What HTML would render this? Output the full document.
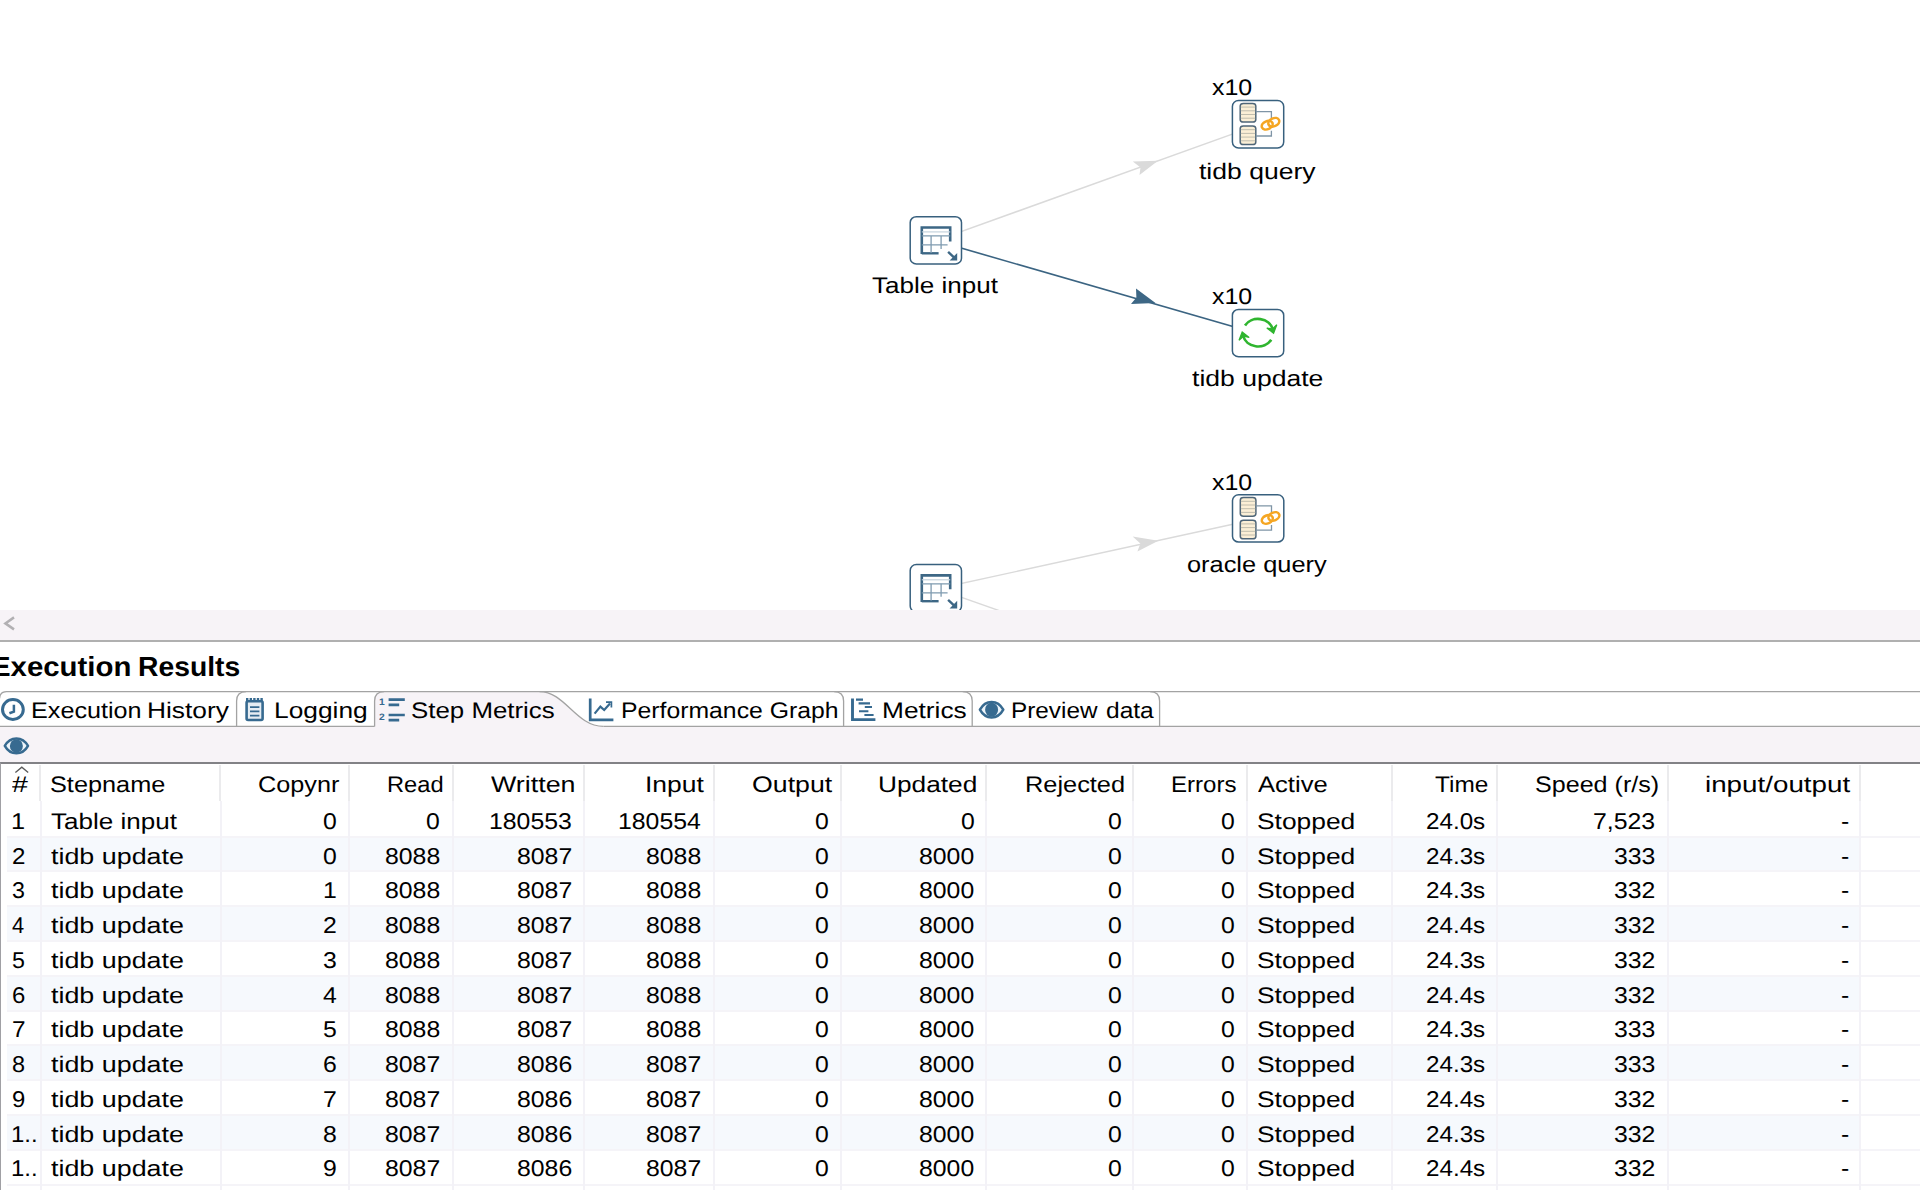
<!DOCTYPE html>
<html lang="en"><head><meta charset="utf-8"><title>Spoon - Execution Results</title>
<style>
html,body{margin:0;padding:0;background:#fff}
body{width:1920px;height:1190px;position:relative;overflow:hidden;font-family:"Liberation Sans",sans-serif;font-size:22.5px;color:#000}
.t{position:absolute;text-rendering:geometricPrecision;white-space:pre;line-height:1em;transform-origin:0 0}
.abs{position:absolute}
#canvas{position:absolute;left:0;top:0;width:1920px;height:610px;overflow:hidden;background:#fff}
#hscroll{position:absolute;left:0;top:610px;width:1920px;height:30px;background:#f7f3f7}
#sash{position:absolute;left:0;top:640px;width:1920px;height:2px;background:#b0b0b0}
#toolbar{position:absolute;left:0;top:727px;width:1920px;height:36px;background:#f7f3f7}
#grid{position:absolute;left:0;top:762px;width:1920px;height:428px;background:#fff;border-top:2px solid #828286;border-left:1px solid #a0a0a4;box-sizing:border-box;overflow:hidden}
.alt{position:absolute;left:7px;width:1853px;background:#f6f9fd}
.hl{position:absolute;left:7px;width:1913px;height:2px;background:#f5f4f8}
.vl{position:absolute;top:801px;width:2px;height:389px;background:#f3f2f7}
.vh{position:absolute;top:765px;width:2px;height:36px;background:#ebebed}
svg{position:absolute;left:0;top:0}
</style></head>
<body>
<div id="canvas">
<svg width="1920" height="610" viewBox="0 0 1920 610">
<path d="M936 240.6 L1258 124.9" stroke="#dadada" stroke-width="1.5" fill="none"/>
<path d="M1158 160.8 L1132.8 161.4 L1140.5 167.4 L1139.5 175 Z" fill="#dadada"/>
<path d="M936 240.8 L1258 333.8" stroke="#3b6482" stroke-width="1.6" fill="none"/>
<path d="M1155.5 303.1 L1136 288.6 L1136.4 297.6 L1131 304 Z" fill="#3d6785"/>
<path d="M936 589 L1258 518.8" stroke="#dadada" stroke-width="1.4" fill="none"/>
<path d="M1158.4 540.7 L1132.6 536.6 L1140.4 543.6 L1137.4 551.4 Z" fill="#dadada"/>
<path d="M936 588.3 L1030 621.5" stroke="#dadada" stroke-width="1.4" fill="none"/>
<g transform="translate(909.6,215.9)"><rect x="0.6" y="0.8" width="51.3" height="47.3" rx="6.2" ry="5.8" fill="#fff" stroke="#38607e" stroke-width="1.5"/><path d="M12.2 38.2 V11.6 H40.6 V25.5" fill="none" stroke="#3d6785" stroke-width="2.6"/><path d="M12.2 37.4 H29" fill="none" stroke="#3d6785" stroke-width="2.4"/><path d="M12.2 20 H40.6 M12.2 29 H38" fill="none" stroke="#7f9bb0" stroke-width="1.3"/><path d="M12.2 16 H40.6" fill="none" stroke="#c5d3dd" stroke-width="1.2"/><path d="M21.5 20 V37 M31.5 20 V33" fill="none" stroke="#7f9bb0" stroke-width="1.3"/><path d="M38.5 36 L46 43" fill="none" stroke="#3d6785" stroke-width="2.4"/><path d="M47.6 37 V44.6 H40 Z" fill="#3d6785"/></g>
<g transform="translate(1231.8,99.8)"><rect x="0.6" y="0.8" width="51.3" height="47.3" rx="6.2" ry="5.8" fill="#fff" stroke="#38607e" stroke-width="1.5"/><rect x="8.4" y="3.6" width="15.6" height="18.6" rx="3.2" ry="2.6" fill="#fbefd6" stroke="#4f6678" stroke-width="1.5"/><path d="M9 7.3 H23.4" stroke="#b9b7a8" stroke-width="0.9"/><path d="M9 11.0 H23.4" stroke="#b9b7a8" stroke-width="0.9"/><path d="M9 14.7 H23.4" stroke="#b9b7a8" stroke-width="0.9"/><path d="M9 18.4 H23.4" stroke="#b9b7a8" stroke-width="0.9"/><rect x="8.4" y="26.2" width="15.6" height="18.6" rx="3.2" ry="2.6" fill="#fbefd6" stroke="#4f6678" stroke-width="1.5"/><path d="M9 29.9 H23.4" stroke="#b9b7a8" stroke-width="0.9"/><path d="M9 33.6 H23.4" stroke="#b9b7a8" stroke-width="0.9"/><path d="M9 37.3 H23.4" stroke="#b9b7a8" stroke-width="0.9"/><path d="M9 41.0 H23.4" stroke="#b9b7a8" stroke-width="0.9"/><path d="M24 11.8 H39.6 V18.5 M24 36.2 H39.6 V31" fill="none" stroke="#7f95a6" stroke-width="1.3"/><ellipse cx="35.4" cy="25.4" rx="5.7" ry="4" fill="none" stroke="#f5a623" stroke-width="2.5" transform="rotate(-24 35.4 25.4)"/><ellipse cx="42" cy="22.5" rx="5.7" ry="4" fill="none" stroke="#f5a623" stroke-width="2.5" transform="rotate(-24 42 22.5)"/></g>
<g transform="translate(1231.8,308.6)"><rect x="0.6" y="0.8" width="51.3" height="47.3" rx="6.2" ry="5.8" fill="#fff" stroke="#38607e" stroke-width="1.5"/><path d="M13.2 16.8 A15.2 13.4 0 0 1 41 20.6" fill="none" stroke="#2fb52f" stroke-width="2.7"/><path d="M35 19.4 L41.8 24.6 L45 16.2 L40.6 20.4 Z" fill="#2fb52f" stroke="#2fb52f" stroke-width="1.2" stroke-linejoin="miter"/><path d="M39.4 31.2 A15.2 13.4 0 0 1 11.4 27.2" fill="none" stroke="#2fb52f" stroke-width="2.7"/><path d="M17.4 28.8 L10.4 23.4 L7.2 31.6 L11.8 27.6 Z" fill="#2fb52f" stroke="#2fb52f" stroke-width="1.2" stroke-linejoin="miter"/></g>
<g transform="translate(1231.9,494)"><rect x="0.6" y="0.8" width="51.3" height="47.3" rx="6.2" ry="5.8" fill="#fff" stroke="#38607e" stroke-width="1.5"/><rect x="8.4" y="3.6" width="15.6" height="18.6" rx="3.2" ry="2.6" fill="#fbefd6" stroke="#4f6678" stroke-width="1.5"/><path d="M9 7.3 H23.4" stroke="#b9b7a8" stroke-width="0.9"/><path d="M9 11.0 H23.4" stroke="#b9b7a8" stroke-width="0.9"/><path d="M9 14.7 H23.4" stroke="#b9b7a8" stroke-width="0.9"/><path d="M9 18.4 H23.4" stroke="#b9b7a8" stroke-width="0.9"/><rect x="8.4" y="26.2" width="15.6" height="18.6" rx="3.2" ry="2.6" fill="#fbefd6" stroke="#4f6678" stroke-width="1.5"/><path d="M9 29.9 H23.4" stroke="#b9b7a8" stroke-width="0.9"/><path d="M9 33.6 H23.4" stroke="#b9b7a8" stroke-width="0.9"/><path d="M9 37.3 H23.4" stroke="#b9b7a8" stroke-width="0.9"/><path d="M9 41.0 H23.4" stroke="#b9b7a8" stroke-width="0.9"/><path d="M24 11.8 H39.6 V18.5 M24 36.2 H39.6 V31" fill="none" stroke="#7f95a6" stroke-width="1.3"/><ellipse cx="35.4" cy="25.4" rx="5.7" ry="4" fill="none" stroke="#f5a623" stroke-width="2.5" transform="rotate(-24 35.4 25.4)"/><ellipse cx="42" cy="22.5" rx="5.7" ry="4" fill="none" stroke="#f5a623" stroke-width="2.5" transform="rotate(-24 42 22.5)"/></g>
<g transform="translate(909.6,563.8)"><rect x="0.6" y="0.8" width="51.3" height="47.3" rx="6.2" ry="5.8" fill="#fff" stroke="#38607e" stroke-width="1.5"/><path d="M12.2 38.2 V11.6 H40.6 V25.5" fill="none" stroke="#3d6785" stroke-width="2.6"/><path d="M12.2 37.4 H29" fill="none" stroke="#3d6785" stroke-width="2.4"/><path d="M12.2 20 H40.6 M12.2 29 H38" fill="none" stroke="#7f9bb0" stroke-width="1.3"/><path d="M12.2 16 H40.6" fill="none" stroke="#c5d3dd" stroke-width="1.2"/><path d="M21.5 20 V37 M31.5 20 V33" fill="none" stroke="#7f9bb0" stroke-width="1.3"/><path d="M38.5 36 L46 43" fill="none" stroke="#3d6785" stroke-width="2.4"/><path d="M47.6 37 V44.6 H40 Z" fill="#3d6785"/></g>
</svg>
<span class="t" style="left:1212.37px;top:77.00px;transform:scaleX(1.1083)">x10</span>
<span class="t" style="left:1199.05px;top:161.00px;transform:scaleX(1.1797)">tidb query</span>
<span class="t" style="left:871.82px;top:275.00px;transform:scaleX(1.1571)">Table input</span>
<span class="t" style="left:1212.37px;top:286.00px;transform:scaleX(1.1083)">x10</span>
<span class="t" style="left:1191.65px;top:368.00px;transform:scaleX(1.1800)">tidb update</span>
<span class="t" style="left:1212.37px;top:472.00px;transform:scaleX(1.1083)">x10</span>
<span class="t" style="left:1187.39px;top:554.00px;transform:scaleX(1.1277)">oracle query</span>
</div>
<div id="hscroll"></div>
<div id="sash"></div>
<div id="toolbar"></div>
<div id="grid"></div>
<div class="hl" style="top:836px"></div>
<div class="alt" style="top:838px;height:32px"></div>
<div class="hl" style="top:870px"></div>
<div class="hl" style="top:905px"></div>
<div class="alt" style="top:907px;height:33px"></div>
<div class="hl" style="top:940px"></div>
<div class="hl" style="top:975px"></div>
<div class="alt" style="top:977px;height:33px"></div>
<div class="hl" style="top:1010px"></div>
<div class="hl" style="top:1044px"></div>
<div class="alt" style="top:1046px;height:33px"></div>
<div class="hl" style="top:1079px"></div>
<div class="hl" style="top:1114px"></div>
<div class="alt" style="top:1116px;height:33px"></div>
<div class="hl" style="top:1149px"></div>
<div class="hl" style="top:1184px"></div>
<div class="vl" style="left:40px"></div><div class="vh" style="left:39px"></div>
<div class="vl" style="left:220px"></div><div class="vh" style="left:219px"></div>
<div class="vl" style="left:348px"></div><div class="vh" style="left:348px"></div>
<div class="vl" style="left:452px"></div><div class="vh" style="left:452px"></div>
<div class="vl" style="left:583px"></div><div class="vh" style="left:583px"></div>
<div class="vl" style="left:713px"></div><div class="vh" style="left:713px"></div>
<div class="vl" style="left:840px"></div><div class="vh" style="left:840px"></div>
<div class="vl" style="left:985px"></div><div class="vh" style="left:985px"></div>
<div class="vl" style="left:1132px"></div><div class="vh" style="left:1132px"></div>
<div class="vl" style="left:1246px"></div><div class="vh" style="left:1246px"></div>
<div class="vl" style="left:1391px"></div><div class="vh" style="left:1391px"></div>
<div class="vl" style="left:1496px"></div><div class="vh" style="left:1496px"></div>
<div class="vl" style="left:1667px"></div><div class="vh" style="left:1667px"></div>
<div class="vl" style="left:1859px"></div><div class="vh" style="left:1859px"></div>
<svg width="1920" height="1190" viewBox="0 0 1920 1190" style="pointer-events:none">
<path d="M374.6 727 V701 Q374.6 691.6 384 691.6 H539.5 C565.5 691.6 575.5 726.4 603.5 726.4 V727 Z" fill="#f7f3f7"/>
<path d="M-0.5 698.5 Q0 691.6 6.5 691.6 H1920" fill="none" stroke="#a3a3a3" stroke-width="1.3"/>
<path d="M0 726.4 H374.6 M603.5 726.4 H1920" fill="none" stroke="#a3a3a3" stroke-width="1.3"/>
<path d="M236.6 726.4 V701 Q236.6 691.6 246.1 691.6" fill="none" stroke="#a3a3a3" stroke-width="1.3"/>
<path d="M374.6 726.4 V701 Q374.6 691.6 384.1 691.6" fill="none" stroke="#a3a3a3" stroke-width="1.3"/>
<path d="M539.5 691.6 C565.5 691.6 575.5 726.4 603.5 726.4" fill="none" stroke="#a3a3a3" stroke-width="1.3"/>
<path d="M843.6 726.4 V701 Q843.6 691.6 834.1 691.6" fill="none" stroke="#a3a3a3" stroke-width="1.3"/>
<path d="M972.2 726.4 V701 Q972.2 691.6 962.7 691.6" fill="none" stroke="#a3a3a3" stroke-width="1.3"/>
<path d="M1159.6 726.4 V701 Q1159.6 691.6 1150.1 691.6" fill="none" stroke="#a3a3a3" stroke-width="1.3"/>
<ellipse cx="12.9" cy="709.5" rx="10.4" ry="9.9" fill="#fff" stroke="#376a90" stroke-width="3"/>
<path d="M13.9 704.8 V711.6 L9.4 713.2" fill="none" stroke="#376a90" stroke-width="2.5"/>
<rect x="246.6" y="701.2" width="16" height="18.8" rx="1.5" fill="#e6edf3" stroke="#376a90" stroke-width="2.6"/>
<path d="M246 699.6 H263.2" stroke="#376a90" stroke-width="3" stroke-dasharray="2.4 1.2"/>
<path d="M250 707.2 H259.4 M250 711.4 H259.4 M250 715.6 H259.4" stroke="#376a90" stroke-width="1.8"/>
<path d="M388.6 699.6 H404.8 M388.6 704.8 H399.2 M388.6 715 H404.8 M388.6 720.2 H399.2" stroke="#376a90" stroke-width="2.7"/>
<path d="M590.2 698.6 V719.8 H613.4" fill="none" stroke="#376a90" stroke-width="2.7"/>
<path d="M594.6 713.6 L600.4 706.6 L604.2 710 L610 703.4" fill="none" stroke="#376a90" stroke-width="2.2"/>
<path d="M606 702.2 H611.4 V707.4" fill="none" stroke="#376a90" stroke-width="1.7"/>
<path d="M852.5 698.4 V719.6 H875.4" fill="none" stroke="#376a90" stroke-width="2.9"/>
<path d="M856 699.6 H863 M858.6 703.4 H870 M864.8 707 H872 M859 711.2 H868.4 M864.4 715 H873.6" stroke="#376a90" stroke-width="2.1"/>
<path d="M979.9 709.7 C985.5160000000001 699.364 997.684 699.364 1003.3000000000001 709.7 C997.684 720.0360000000001 985.5160000000001 720.0360000000001 979.9 709.7 Z" fill="#edf4fa" stroke="#376a90" stroke-width="2.5" stroke-linejoin="round"/><ellipse cx="991.6" cy="709.7" rx="6.5" ry="7.0" fill="#376a90"/>
<path d="M4.799999999999999 745.9 C10.367999999999999 735.972 22.432 735.972 28.0 745.9 C22.432 755.828 10.367999999999999 755.828 4.799999999999999 745.9 Z" fill="#edf4fa" stroke="#376a90" stroke-width="2.5" stroke-linejoin="round"/><ellipse cx="16.4" cy="745.9" rx="6.5" ry="6.7" fill="#376a90"/>
<path d="M15.4 772.6 L21.8 767.2 L28.2 772.6" fill="none" stroke="#5a5a5a" stroke-width="1.3"/>
<path d="M14 617.4 L5.4 623.4 L14 629.4" fill="none" stroke="#b2b0b3" stroke-width="2.5"/>
</svg>
<span class="t" style="left:-8.92px;top:653.00px;transform:scaleX(1.0647);font-size:27.6px;font-weight:bold">Execution</span>
<span class="t" style="left:138.35px;top:653.00px;transform:scaleX(1.0258);font-size:27.6px;font-weight:bold">Results</span>
<span class="t" style="left:31.39px;top:700.00px;transform:scaleX(1.1192)">Execution</span>
<span class="t" style="left:147.09px;top:700.00px;transform:scaleX(1.1701)">History</span>
<span class="t" style="left:273.89px;top:700.00px;transform:scaleX(1.1704)">Logging</span>
<span class="t" style="left:411.45px;top:700.00px;transform:scaleX(1.1494)">Step Metrics</span>
<span class="t" style="left:621.02px;top:700.00px;transform:scaleX(1.1008)">Performance Graph</span>
<span class="t" style="left:881.80px;top:700.00px;transform:scaleX(1.1676)">Metrics</span>
<span class="t" style="left:1010.66px;top:700.00px;transform:scaleX(1.0805)">Preview</span>
<span class="t" style="left:1105.82px;top:700.00px;transform:scaleX(1.0909)">data</span>
<span class="t" style="left:379.4px;top:697.06px;font-size:9.4px;font-weight:bold;color:#376a90;transform:scaleX(1.1)">1</span>
<span class="t" style="left:379.2px;top:712.46px;font-size:9.4px;font-weight:bold;color:#376a90;transform:scaleX(1.1)">2</span>
<span class="t" style="left:11.67px;top:774.00px;transform:scaleX(1.2683)">#</span>
<span class="t" style="left:49.88px;top:774.00px;transform:scaleX(1.1243)">Stepname</span>
<span class="t" style="left:258.17px;top:774.00px;transform:scaleX(1.1225)">Copynr</span>
<span class="t" style="left:387.01px;top:774.00px;transform:scaleX(1.0514)">Read</span>
<span class="t" style="left:490.78px;top:774.00px;transform:scaleX(1.1934)">Written</span>
<span class="t" style="left:645.43px;top:774.00px;transform:scaleX(1.1757)">Input</span>
<span class="t" style="left:751.59px;top:774.00px;transform:scaleX(1.1870)">Output</span>
<span class="t" style="left:877.92px;top:774.00px;transform:scaleX(1.1671)">Updated</span>
<span class="t" style="left:1024.87px;top:774.00px;transform:scaleX(1.1268)">Rejected</span>
<span class="t" style="left:1170.97px;top:774.00px;transform:scaleX(1.0700)">Errors</span>
<span class="t" style="left:1257.79px;top:774.00px;transform:scaleX(1.1370)">Active</span>
<span class="t" style="left:1434.86px;top:774.00px;transform:scaleX(1.0839)">Time</span>
<span class="t" style="left:1535.03px;top:774.00px;transform:scaleX(1.1152)">Speed (r/s)</span>
<span class="t" style="left:1704.55px;top:774.00px;transform:scaleX(1.2345)">input/output</span>
<span class="t" style="left:11.01px;top:810.00px;transform:scaleX(1.1111);font-size:22.8px">1</span>
<span class="t" style="left:50.82px;top:811.00px;transform:scaleX(1.1571)">Table input</span>
<span class="t" style="left:323.06px;top:810.00px;transform:scaleX(1.0880);font-size:22.8px">0</span>
<span class="t" style="left:426.36px;top:810.00px;transform:scaleX(1.0880);font-size:22.8px">0</span>
<span class="t" style="left:488.89px;top:810.00px;transform:scaleX(1.0880);font-size:22.8px">180553</span>
<span class="t" style="left:618.06px;top:810.00px;transform:scaleX(1.0880);font-size:22.8px">180554</span>
<span class="t" style="left:814.56px;top:810.00px;transform:scaleX(1.0880);font-size:22.8px">0</span>
<span class="t" style="left:960.76px;top:810.00px;transform:scaleX(1.0880);font-size:22.8px">0</span>
<span class="t" style="left:1108.16px;top:810.00px;transform:scaleX(1.0880);font-size:22.8px">0</span>
<span class="t" style="left:1221.06px;top:810.00px;transform:scaleX(1.0880);font-size:22.8px">0</span>
<span class="t" style="left:1256.73px;top:811.00px;transform:scaleX(1.1726)">Stopped</span>
<span class="t" style="left:1426.13px;top:810.00px;transform:scaleX(1.0612);font-size:22.8px">24.0s</span>
<span class="t" style="left:1593.16px;top:810.00px;transform:scaleX(1.0880);font-size:22.8px">7,523</span>
<span class="t" style="left:1840.62px;top:810.00px;transform:scaleX(1.0880);font-size:22.8px">-</span>
<span class="t" style="left:11.74px;top:845.00px;transform:scaleX(1.0577);font-size:22.8px">2</span>
<span class="t" style="left:50.84px;top:846.00px;transform:scaleX(1.1936)">tidb update</span>
<span class="t" style="left:323.06px;top:845.00px;transform:scaleX(1.0880);font-size:22.8px">0</span>
<span class="t" style="left:385.13px;top:845.00px;transform:scaleX(1.0880);font-size:22.8px">8088</span>
<span class="t" style="left:516.74px;top:845.00px;transform:scaleX(1.0880);font-size:22.8px">8087</span>
<span class="t" style="left:646.03px;top:845.00px;transform:scaleX(1.0880);font-size:22.8px">8088</span>
<span class="t" style="left:814.56px;top:845.00px;transform:scaleX(1.0880);font-size:22.8px">0</span>
<span class="t" style="left:919.42px;top:845.00px;transform:scaleX(1.0880);font-size:22.8px">8000</span>
<span class="t" style="left:1108.16px;top:845.00px;transform:scaleX(1.0880);font-size:22.8px">0</span>
<span class="t" style="left:1221.06px;top:845.00px;transform:scaleX(1.0880);font-size:22.8px">0</span>
<span class="t" style="left:1256.73px;top:846.00px;transform:scaleX(1.1726)">Stopped</span>
<span class="t" style="left:1426.13px;top:845.00px;transform:scaleX(1.0612);font-size:22.8px">24.3s</span>
<span class="t" style="left:1613.84px;top:845.00px;transform:scaleX(1.0880);font-size:22.8px">333</span>
<span class="t" style="left:1840.62px;top:845.00px;transform:scaleX(1.0880);font-size:22.8px">-</span>
<span class="t" style="left:11.98px;top:879.00px;transform:scaleX(1.0185);font-size:22.8px">3</span>
<span class="t" style="left:50.84px;top:880.00px;transform:scaleX(1.1936)">tidb update</span>
<span class="t" style="left:323.28px;top:879.00px;transform:scaleX(1.0880);font-size:22.8px">1</span>
<span class="t" style="left:385.13px;top:879.00px;transform:scaleX(1.0880);font-size:22.8px">8088</span>
<span class="t" style="left:516.74px;top:879.00px;transform:scaleX(1.0880);font-size:22.8px">8087</span>
<span class="t" style="left:646.03px;top:879.00px;transform:scaleX(1.0880);font-size:22.8px">8088</span>
<span class="t" style="left:814.56px;top:879.00px;transform:scaleX(1.0880);font-size:22.8px">0</span>
<span class="t" style="left:919.42px;top:879.00px;transform:scaleX(1.0880);font-size:22.8px">8000</span>
<span class="t" style="left:1108.16px;top:879.00px;transform:scaleX(1.0880);font-size:22.8px">0</span>
<span class="t" style="left:1221.06px;top:879.00px;transform:scaleX(1.0880);font-size:22.8px">0</span>
<span class="t" style="left:1256.73px;top:880.00px;transform:scaleX(1.1726)">Stopped</span>
<span class="t" style="left:1426.13px;top:879.00px;transform:scaleX(1.0612);font-size:22.8px">24.3s</span>
<span class="t" style="left:1614.05px;top:879.00px;transform:scaleX(1.0880);font-size:22.8px">332</span>
<span class="t" style="left:1840.62px;top:879.00px;transform:scaleX(1.0880);font-size:22.8px">-</span>
<span class="t" style="left:12.42px;top:914.00px;transform:scaleX(0.9565);font-size:22.8px">4</span>
<span class="t" style="left:50.84px;top:915.00px;transform:scaleX(1.1936)">tidb update</span>
<span class="t" style="left:323.39px;top:914.00px;transform:scaleX(1.0880);font-size:22.8px">2</span>
<span class="t" style="left:385.13px;top:914.00px;transform:scaleX(1.0880);font-size:22.8px">8088</span>
<span class="t" style="left:516.74px;top:914.00px;transform:scaleX(1.0880);font-size:22.8px">8087</span>
<span class="t" style="left:646.03px;top:914.00px;transform:scaleX(1.0880);font-size:22.8px">8088</span>
<span class="t" style="left:814.56px;top:914.00px;transform:scaleX(1.0880);font-size:22.8px">0</span>
<span class="t" style="left:919.42px;top:914.00px;transform:scaleX(1.0880);font-size:22.8px">8000</span>
<span class="t" style="left:1108.16px;top:914.00px;transform:scaleX(1.0880);font-size:22.8px">0</span>
<span class="t" style="left:1221.06px;top:914.00px;transform:scaleX(1.0880);font-size:22.8px">0</span>
<span class="t" style="left:1256.73px;top:915.00px;transform:scaleX(1.1726)">Stopped</span>
<span class="t" style="left:1426.13px;top:914.00px;transform:scaleX(1.0612);font-size:22.8px">24.4s</span>
<span class="t" style="left:1614.05px;top:914.00px;transform:scaleX(1.0880);font-size:22.8px">332</span>
<span class="t" style="left:1840.62px;top:914.00px;transform:scaleX(1.0880);font-size:22.8px">-</span>
<span class="t" style="left:11.98px;top:949.00px;transform:scaleX(1.0185);font-size:22.8px">5</span>
<span class="t" style="left:50.84px;top:950.00px;transform:scaleX(1.1936)">tidb update</span>
<span class="t" style="left:323.17px;top:949.00px;transform:scaleX(1.0880);font-size:22.8px">3</span>
<span class="t" style="left:385.13px;top:949.00px;transform:scaleX(1.0880);font-size:22.8px">8088</span>
<span class="t" style="left:516.74px;top:949.00px;transform:scaleX(1.0880);font-size:22.8px">8087</span>
<span class="t" style="left:646.03px;top:949.00px;transform:scaleX(1.0880);font-size:22.8px">8088</span>
<span class="t" style="left:814.56px;top:949.00px;transform:scaleX(1.0880);font-size:22.8px">0</span>
<span class="t" style="left:919.42px;top:949.00px;transform:scaleX(1.0880);font-size:22.8px">8000</span>
<span class="t" style="left:1108.16px;top:949.00px;transform:scaleX(1.0880);font-size:22.8px">0</span>
<span class="t" style="left:1221.06px;top:949.00px;transform:scaleX(1.0880);font-size:22.8px">0</span>
<span class="t" style="left:1256.73px;top:950.00px;transform:scaleX(1.1726)">Stopped</span>
<span class="t" style="left:1426.13px;top:949.00px;transform:scaleX(1.0612);font-size:22.8px">24.3s</span>
<span class="t" style="left:1614.05px;top:949.00px;transform:scaleX(1.0880);font-size:22.8px">332</span>
<span class="t" style="left:1840.62px;top:949.00px;transform:scaleX(1.0880);font-size:22.8px">-</span>
<span class="t" style="left:11.64px;top:984.00px;transform:scaleX(1.0476);font-size:22.8px">6</span>
<span class="t" style="left:50.84px;top:985.00px;transform:scaleX(1.1936)">tidb update</span>
<span class="t" style="left:322.84px;top:984.00px;transform:scaleX(1.0880);font-size:22.8px">4</span>
<span class="t" style="left:385.13px;top:984.00px;transform:scaleX(1.0880);font-size:22.8px">8088</span>
<span class="t" style="left:516.74px;top:984.00px;transform:scaleX(1.0880);font-size:22.8px">8087</span>
<span class="t" style="left:646.03px;top:984.00px;transform:scaleX(1.0880);font-size:22.8px">8088</span>
<span class="t" style="left:814.56px;top:984.00px;transform:scaleX(1.0880);font-size:22.8px">0</span>
<span class="t" style="left:919.42px;top:984.00px;transform:scaleX(1.0880);font-size:22.8px">8000</span>
<span class="t" style="left:1108.16px;top:984.00px;transform:scaleX(1.0880);font-size:22.8px">0</span>
<span class="t" style="left:1221.06px;top:984.00px;transform:scaleX(1.0880);font-size:22.8px">0</span>
<span class="t" style="left:1256.73px;top:985.00px;transform:scaleX(1.1726)">Stopped</span>
<span class="t" style="left:1426.13px;top:984.00px;transform:scaleX(1.0612);font-size:22.8px">24.4s</span>
<span class="t" style="left:1614.05px;top:984.00px;transform:scaleX(1.0880);font-size:22.8px">332</span>
<span class="t" style="left:1840.62px;top:984.00px;transform:scaleX(1.0880);font-size:22.8px">-</span>
<span class="t" style="left:11.62px;top:1018.00px;transform:scaleX(1.0680);font-size:22.8px">7</span>
<span class="t" style="left:50.84px;top:1019.00px;transform:scaleX(1.1936)">tidb update</span>
<span class="t" style="left:323.17px;top:1018.00px;transform:scaleX(1.0880);font-size:22.8px">5</span>
<span class="t" style="left:385.13px;top:1018.00px;transform:scaleX(1.0880);font-size:22.8px">8088</span>
<span class="t" style="left:516.74px;top:1018.00px;transform:scaleX(1.0880);font-size:22.8px">8087</span>
<span class="t" style="left:646.03px;top:1018.00px;transform:scaleX(1.0880);font-size:22.8px">8088</span>
<span class="t" style="left:814.56px;top:1018.00px;transform:scaleX(1.0880);font-size:22.8px">0</span>
<span class="t" style="left:919.42px;top:1018.00px;transform:scaleX(1.0880);font-size:22.8px">8000</span>
<span class="t" style="left:1108.16px;top:1018.00px;transform:scaleX(1.0880);font-size:22.8px">0</span>
<span class="t" style="left:1221.06px;top:1018.00px;transform:scaleX(1.0880);font-size:22.8px">0</span>
<span class="t" style="left:1256.73px;top:1019.00px;transform:scaleX(1.1726)">Stopped</span>
<span class="t" style="left:1426.13px;top:1018.00px;transform:scaleX(1.0612);font-size:22.8px">24.3s</span>
<span class="t" style="left:1613.84px;top:1018.00px;transform:scaleX(1.0880);font-size:22.8px">333</span>
<span class="t" style="left:1840.62px;top:1018.00px;transform:scaleX(1.0880);font-size:22.8px">-</span>
<span class="t" style="left:11.87px;top:1053.00px;transform:scaleX(1.0280);font-size:22.8px">8</span>
<span class="t" style="left:50.84px;top:1054.00px;transform:scaleX(1.1936)">tidb update</span>
<span class="t" style="left:323.17px;top:1053.00px;transform:scaleX(1.0880);font-size:22.8px">6</span>
<span class="t" style="left:385.34px;top:1053.00px;transform:scaleX(1.0880);font-size:22.8px">8087</span>
<span class="t" style="left:516.53px;top:1053.00px;transform:scaleX(1.0880);font-size:22.8px">8086</span>
<span class="t" style="left:646.24px;top:1053.00px;transform:scaleX(1.0880);font-size:22.8px">8087</span>
<span class="t" style="left:814.56px;top:1053.00px;transform:scaleX(1.0880);font-size:22.8px">0</span>
<span class="t" style="left:919.42px;top:1053.00px;transform:scaleX(1.0880);font-size:22.8px">8000</span>
<span class="t" style="left:1108.16px;top:1053.00px;transform:scaleX(1.0880);font-size:22.8px">0</span>
<span class="t" style="left:1221.06px;top:1053.00px;transform:scaleX(1.0880);font-size:22.8px">0</span>
<span class="t" style="left:1256.73px;top:1054.00px;transform:scaleX(1.1726)">Stopped</span>
<span class="t" style="left:1426.13px;top:1053.00px;transform:scaleX(1.0612);font-size:22.8px">24.3s</span>
<span class="t" style="left:1613.84px;top:1053.00px;transform:scaleX(1.0880);font-size:22.8px">333</span>
<span class="t" style="left:1840.62px;top:1053.00px;transform:scaleX(1.0880);font-size:22.8px">-</span>
<span class="t" style="left:11.75px;top:1088.00px;transform:scaleX(1.0476);font-size:22.8px">9</span>
<span class="t" style="left:50.84px;top:1089.00px;transform:scaleX(1.1936)">tidb update</span>
<span class="t" style="left:323.39px;top:1088.00px;transform:scaleX(1.0880);font-size:22.8px">7</span>
<span class="t" style="left:385.34px;top:1088.00px;transform:scaleX(1.0880);font-size:22.8px">8087</span>
<span class="t" style="left:516.53px;top:1088.00px;transform:scaleX(1.0880);font-size:22.8px">8086</span>
<span class="t" style="left:646.24px;top:1088.00px;transform:scaleX(1.0880);font-size:22.8px">8087</span>
<span class="t" style="left:814.56px;top:1088.00px;transform:scaleX(1.0880);font-size:22.8px">0</span>
<span class="t" style="left:919.42px;top:1088.00px;transform:scaleX(1.0880);font-size:22.8px">8000</span>
<span class="t" style="left:1108.16px;top:1088.00px;transform:scaleX(1.0880);font-size:22.8px">0</span>
<span class="t" style="left:1221.06px;top:1088.00px;transform:scaleX(1.0880);font-size:22.8px">0</span>
<span class="t" style="left:1256.73px;top:1089.00px;transform:scaleX(1.1726)">Stopped</span>
<span class="t" style="left:1426.13px;top:1088.00px;transform:scaleX(1.0612);font-size:22.8px">24.4s</span>
<span class="t" style="left:1614.05px;top:1088.00px;transform:scaleX(1.0880);font-size:22.8px">332</span>
<span class="t" style="left:1840.62px;top:1088.00px;transform:scaleX(1.0880);font-size:22.8px">-</span>
<span class="t" style="left:11.11px;top:1123.00px;transform:scaleX(1.0509);font-size:22.8px">1..</span>
<span class="t" style="left:50.84px;top:1124.00px;transform:scaleX(1.1936)">tidb update</span>
<span class="t" style="left:323.17px;top:1123.00px;transform:scaleX(1.0880);font-size:22.8px">8</span>
<span class="t" style="left:385.34px;top:1123.00px;transform:scaleX(1.0880);font-size:22.8px">8087</span>
<span class="t" style="left:516.53px;top:1123.00px;transform:scaleX(1.0880);font-size:22.8px">8086</span>
<span class="t" style="left:646.24px;top:1123.00px;transform:scaleX(1.0880);font-size:22.8px">8087</span>
<span class="t" style="left:814.56px;top:1123.00px;transform:scaleX(1.0880);font-size:22.8px">0</span>
<span class="t" style="left:919.42px;top:1123.00px;transform:scaleX(1.0880);font-size:22.8px">8000</span>
<span class="t" style="left:1108.16px;top:1123.00px;transform:scaleX(1.0880);font-size:22.8px">0</span>
<span class="t" style="left:1221.06px;top:1123.00px;transform:scaleX(1.0880);font-size:22.8px">0</span>
<span class="t" style="left:1256.73px;top:1124.00px;transform:scaleX(1.1726)">Stopped</span>
<span class="t" style="left:1426.13px;top:1123.00px;transform:scaleX(1.0612);font-size:22.8px">24.3s</span>
<span class="t" style="left:1614.05px;top:1123.00px;transform:scaleX(1.0880);font-size:22.8px">332</span>
<span class="t" style="left:1840.62px;top:1123.00px;transform:scaleX(1.0880);font-size:22.8px">-</span>
<span class="t" style="left:11.11px;top:1157.00px;transform:scaleX(1.0509);font-size:22.8px">1..</span>
<span class="t" style="left:50.84px;top:1158.00px;transform:scaleX(1.1936)">tidb update</span>
<span class="t" style="left:323.28px;top:1157.00px;transform:scaleX(1.0880);font-size:22.8px">9</span>
<span class="t" style="left:385.34px;top:1157.00px;transform:scaleX(1.0880);font-size:22.8px">8087</span>
<span class="t" style="left:516.53px;top:1157.00px;transform:scaleX(1.0880);font-size:22.8px">8086</span>
<span class="t" style="left:646.24px;top:1157.00px;transform:scaleX(1.0880);font-size:22.8px">8087</span>
<span class="t" style="left:814.56px;top:1157.00px;transform:scaleX(1.0880);font-size:22.8px">0</span>
<span class="t" style="left:919.42px;top:1157.00px;transform:scaleX(1.0880);font-size:22.8px">8000</span>
<span class="t" style="left:1108.16px;top:1157.00px;transform:scaleX(1.0880);font-size:22.8px">0</span>
<span class="t" style="left:1221.06px;top:1157.00px;transform:scaleX(1.0880);font-size:22.8px">0</span>
<span class="t" style="left:1256.73px;top:1158.00px;transform:scaleX(1.1726)">Stopped</span>
<span class="t" style="left:1426.13px;top:1157.00px;transform:scaleX(1.0612);font-size:22.8px">24.4s</span>
<span class="t" style="left:1614.05px;top:1157.00px;transform:scaleX(1.0880);font-size:22.8px">332</span>
<span class="t" style="left:1840.62px;top:1157.00px;transform:scaleX(1.0880);font-size:22.8px">-</span>
</body></html>
